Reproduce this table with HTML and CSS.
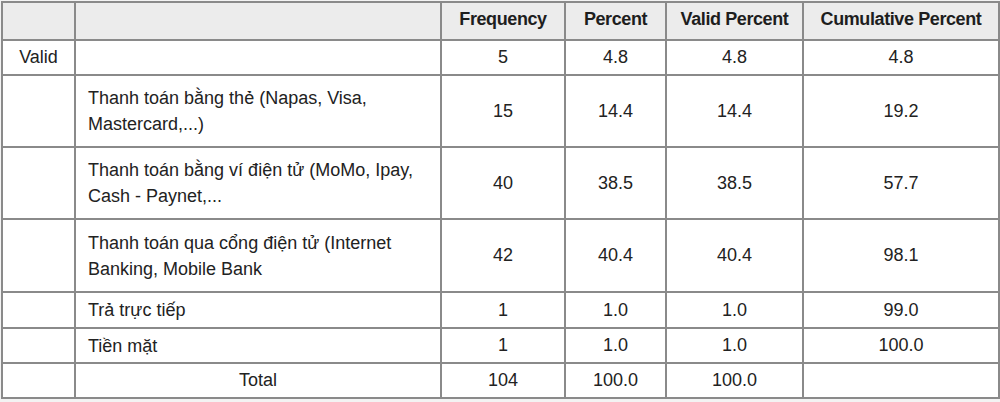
FILE: index.html
```html
<!DOCTYPE html>
<html lang="vi">
<head>
<meta charset="utf-8">
<title>Frequency table</title>
<link rel="stylesheet" href="styles.css">
</head>
<body>
<table class="freq">
  <colgroup>
    <col class="c1"><col class="c2"><col class="c3"><col class="c4"><col class="c5"><col class="c6">
  </colgroup>
  <thead>
    <tr class="r-head">
      <th></th><th></th><th>Frequency</th><th>Percent</th><th>Valid Percent</th><th>Cumulative Percent</th>
    </tr>
  </thead>
  <tbody>
    <tr class="r-1">
      <td class="center">Valid</td><td></td><td class="center">5</td><td class="center">4.8</td><td class="center">4.8</td><td class="center">4.8</td>
    </tr>
    <tr class="r-2">
      <td></td><td class="label">Thanh toán bằng thẻ (Napas, Visa,<br>Mastercard,...)</td><td class="center">15</td><td class="center">14.4</td><td class="center">14.4</td><td class="center">19.2</td>
    </tr>
    <tr class="r-2">
      <td></td><td class="label">Thanh toán bằng ví điện tử (MoMo, Ipay,<br>Cash - Paynet,...</td><td class="center">40</td><td class="center">38.5</td><td class="center">38.5</td><td class="center">57.7</td>
    </tr>
    <tr class="r-2b">
      <td></td><td class="label">Thanh toán qua cổng điện tử (Internet<br>Banking, Mobile Bank</td><td class="center">42</td><td class="center">40.4</td><td class="center">40.4</td><td class="center">98.1</td>
    </tr>
    <tr class="r-1b">
      <td></td><td class="label">Trả trực tiếp</td><td class="center">1</td><td class="center">1.0</td><td class="center">1.0</td><td class="center">99.0</td>
    </tr>
    <tr class="r-1">
      <td></td><td class="label">Tiền mặt</td><td class="center">1</td><td class="center">1.0</td><td class="center">1.0</td><td class="center">100.0</td>
    </tr>
    <tr class="r-1">
      <td></td><td class="center">Total</td><td class="center">104</td><td class="center">100.0</td><td class="center">100.0</td><td></td>
    </tr>
  </tbody>
</table>
</body>
</html>
```
FILE: styles.css
```css
html, body {
  margin: 0;
  padding: 0;
  background: #f3f3f3;
}

body {
  padding: 1px 0 0 1px;
  font-family: "Liberation Sans", Arial, sans-serif;
  color: #222;
}

.freq {
  border-collapse: collapse;
  table-layout: fixed;
  width: 997px;
  background: #fff;
  font-size: 18px;
}

.c1 { width: 73px; }
.c2 { width: 366px; }
.c3 { width: 124px; }
.c4 { width: 101px; }
.c5 { width: 137px; }
.c6 { width: 196px; }

.freq th,
.freq td {
  border: 2px solid #8a8a8a;
  padding: 0;
  vertical-align: middle;
}

.freq th {
  background: #ececec;
  font-weight: bold;
  letter-spacing: -0.4px;
  text-align: center;
  color: #1e1e1e;
  padding-bottom: 3px;
}

.r-head { height: 38px; }
.r-1 { height: 35px; }
.r-1b { height: 36px; }
.r-2 { height: 72px; }
.r-2b { height: 73px; }

.freq td.center { text-align: center; }

.freq td.label {
  text-align: left;
  padding-left: 12px;
  line-height: 26px;
}
```
